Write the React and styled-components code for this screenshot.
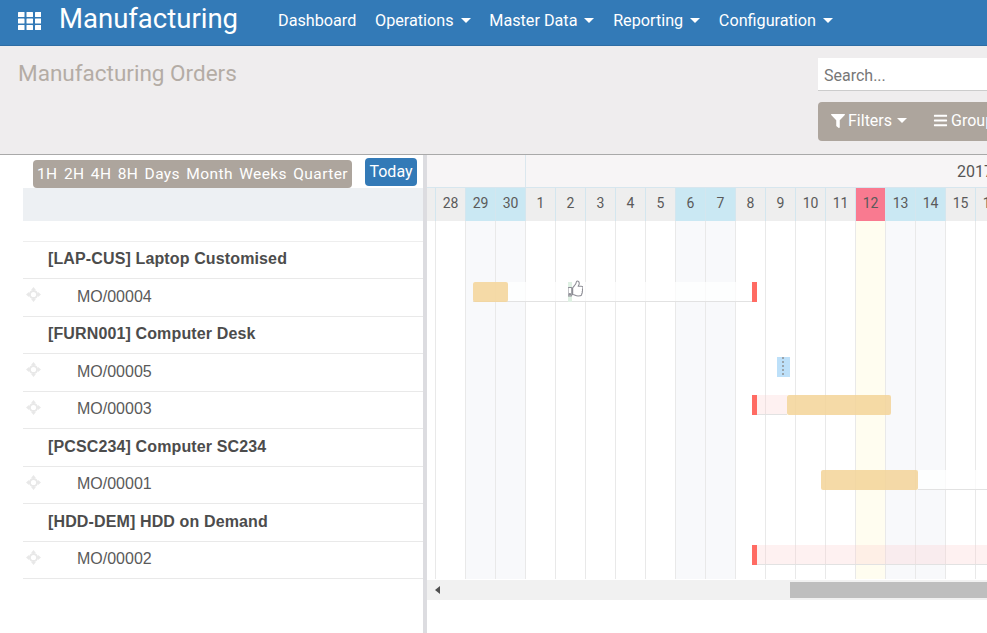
import React from "react";
import styled, { createGlobalStyle } from "styled-components";
import { FaFilter, FaBars, FaThumbsUp } from "react-icons/fa";

const CELL = 30;
const CHART_LEFT = 427;

const days = ["", 28, 29, 30, 1, 2, 3, 4, 5, 6, 7, 8, 9, 10, 11, 12, 13, 14, 15, 16, 17, 18];
const weekend = [29, 30, 6, 7, 13, 14];
const today = 12;

const GlobalStyle = createGlobalStyle`
  html, body {
    margin: 0;
    padding: 0;
    height: 100%;
    overflow: hidden;
    background: #fff;
    font-family: Roboto, sans-serif;
  }
`;

const Page = styled.div`
  width: 987px;
  height: 633px;
  overflow: hidden;
  display: flex;
  flex-direction: column;
`;

const Navbar = styled.nav`
  height: 41px;
  padding-bottom: 4px;
  flex: none;
  display: flex;
  align-items: center;
  background: #337ab7;
  border-bottom: 1px solid #2e6da4;
  color: #fff;
`;

const AppsIcon = styled.svg`
  width: 23px;
  height: 18px;
  margin-left: 18px;
  fill: #fff;
`;

const Brand = styled.div`
  font-size: 27.5px;
  line-height: 36px;
  margin-left: 18px;
  margin-right: 40px;
  position: relative;
  top: -2px;
`;

const NavList = styled.div`
  display: flex;
  gap: 18.7px;
  font-size: 16.2px;
`;

const NavItem = styled.div`
  display: flex;
  align-items: center;
  gap: 7px;
  white-space: nowrap;
`;

const Caret = styled.span`
  display: inline-block;
  border-top: 5px solid #fff;
  border-left: 5px solid transparent;
  border-right: 5px solid transparent;
`;

const ControlPanel = styled.div`
  height: 108px;
  flex: none;
  display: flex;
  background: #efedee;
  border-bottom: 1px solid #a9a9a9;
`;

const Title = styled.h1`
  flex: 0 0 800px;
  margin: 0;
  padding: 13px 0 0 18px;
  font-size: 22.5px;
  line-height: 28px;
  font-weight: 400;
  color: #b4aca5;
`;

const Tools = styled.div`
  flex: none;
  width: 400px;
  display: flex;
  flex-direction: column;
  gap: 11px;
  padding-top: 12px;
`;

const Search = styled.div`
  height: 32px;
  background: #fff;
  border-bottom: 1px solid #ccc;
  padding-left: 6px;
  line-height: 35px;
  font-size: 16px;
  color: #777;
`;

const FilterBar = styled.div`
  height: 39px;
  padding-bottom: 2px;
  box-sizing: border-box;
  background: #ada59d;
  border-radius: 4px;
  display: flex;
  align-items: center;
  gap: 26px;
  padding-left: 13px;
  color: #fff;
  font-size: 16px;
`;

const FilterButton = styled.div`
  display: flex;
  align-items: center;
  gap: 3px;
  white-space: nowrap;

  ${Caret} {
    margin-left: 2px;
  }
`;

const Workspace = styled.div`
  flex: 1;
  display: flex;
  min-height: 0;
`;

const LeftPanel = styled.div`
  flex: none;
  width: 423px;
  box-sizing: content-box;
  border-right: 4px solid #dcdce0;
`;

const ScaleRow = styled.div`
  height: 33px;
  display: flex;
  padding-left: 33px;
  padding-right: 6px;
  justify-content: space-between;
`;

const ScaleGroup = styled.div`
  height: 28px;
  margin-top: 5px;
  width: 319px;
  box-sizing: border-box;
  background: #ada59d;
  border-radius: 4px;
  display: flex;
  align-items: center;
  justify-content: space-between;
  padding: 0 4px;
  color: #fff;
  font-size: 15.5px;
  letter-spacing: 0.4px;
`;

const TodayButton = styled.div`
  width: 52px;
  height: 28px;
  margin-top: 3px;
  background: #337ab7;
  border-radius: 4px;
  color: #fff;
  font-size: 16px;
  line-height: 28px;
  text-align: center;
`;

const ListHead = styled.div`
  height: 33px;
  margin-left: 23px;
  background: #edf0f3;
`;

const ListSpacer = styled.div`
  height: 19.5px;
  margin-left: 23px;
  border-bottom: 1px solid #eee;
`;

const Row = styled.div`
  height: 37.5px;
  box-sizing: border-box;
  margin-left: 23px;
  padding-bottom: 1px;
  border-bottom: 1px solid #e9e9e9;
  position: relative;
  display: flex;
  align-items: center;
  font-family: "Liberation Sans", Arial, sans-serif;
  font-size: 16px;
  padding-left: ${(p) => (p.$group ? "25px" : "54px")};
  font-weight: ${(p) => (p.$group ? 700 : 400)};
  letter-spacing: ${(p) => (p.$group ? "0.13px" : "0")};
  color: ${(p) => (p.$group ? "#4c4c4c" : "#5a5a5a")};
`;

const DragHandle = styled.svg`
  position: absolute;
  left: 3px;
  top: 8px;
  width: 15px;
  height: 15px;
  color: #e8e8e8;
`;

const Chart = styled.div`
  flex: 1;
  min-width: 0;
  position: relative;
  overflow: hidden;
  display: flex;
  flex-direction: column;
`;

const HeadTop = styled.div`
  height: 33px;
  flex: none;
  display: flex;
  background: #f7f5f6;
  border-bottom: 1px solid #d7e6ee;
  box-sizing: border-box;
`;

const YearStub = styled.div`
  flex: 0 0 98px;
  border-right: 1px solid #dbe7ee;
`;

const Year = styled.div`
  padding-left: 431px;
  font-size: 16px;
  line-height: 34px;
  color: #555;
  white-space: nowrap;
`;

const DayRow = styled.div`
  height: 33px;
  flex: none;
  display: flex;
`;

const DayCell = styled.div`
  flex: 0 0 ${CELL}px;
  box-sizing: border-box;
  margin-left: ${(p) => (p.$first ? "-22px" : "0")};
  border-left: 1px solid #d3e6ef;
  text-align: center;
  font-size: 14px;
  line-height: 31px;
  color: #5a5a5a;
  background: ${(p) => (p.$today ? "#f97a90" : p.$weekend ? "#cae8f3" : "#eeeeee")};
`;

const Body = styled.div`
  position: relative;
  height: 358px;
  flex: none;
  display: flex;
`;

const Column = styled.div`
  flex: 0 0 ${CELL}px;
  box-sizing: border-box;
  margin-left: ${(p) => (p.$first ? "-22px" : "0")};
  border-left: 1px solid #e9e9e9;
  background: ${(p) => (p.$today ? "#fffdf0" : p.$weekend ? "#f8f9fb" : "#fff")};
`;

const BarLayer = styled.div`
  position: absolute;
  inset: 0;
  display: flex;
  flex-direction: column;
  padding-top: 20px;
`;

const BarRow = styled.div`
  height: 37.5px;
  flex: none;
  position: relative;
`;

const Bar = styled.div`
  position: absolute;
  top: 3.5px;
  height: 20px;
  box-sizing: border-box;
`;

const Ready = styled(Bar)`
  background: rgba(243, 212, 152, 0.85);
  border-radius: 2px;
`;

const Track = styled(Bar)`
  background: ${(p) => (p.$late ? "rgba(250, 205, 205, 0.28)" : "rgba(255, 255, 255, 0.72)")};
  border-bottom: 1px solid #e2e2e2;
`;

const Deadline = styled(Bar)`
  background: #ff6b63;
`;

const Pulse = styled(Bar)`
  background: #bde0f9;
  &::after {
    content: "";
    position: absolute;
    left: 5px;
    top: 0;
    bottom: 0;
    width: 2px;
    background: repeating-linear-gradient(to bottom, #9aa5ad 0 2px, transparent 2px 4px);
  }
`;

const Marker = styled(Bar)`
  background: #dff0e3;
`;

const ThumbIcon = styled(FaThumbsUp)`
  position: absolute;
  top: 1px;
  width: 15px;
  height: 17px;
  color: #fff;
  stroke: #8d8d95;
  stroke-width: 36px;
`;

const Scrollbar = styled.div`
  height: 20px;
  flex: none;
  margin-top: 1px;
  background: #f1f1f1;
  display: flex;
  align-items: center;
`;

const ScrollArrow = styled.span`
  margin-left: 8px;
  border-right: 5px solid #505050;
  border-top: 4px solid transparent;
  border-bottom: 4px solid transparent;
`;

const ScrollThumb = styled.div`
  height: 16px;
  width: 300px;
  margin-left: 350px;
  background: #bebebe;
`;

const rows = [
  { label: "[LAP-CUS] Laptop Customised", group: true },
  { label: "MO/00004" },
  { label: "[FURN001] Computer Desk", group: true },
  { label: "MO/00005" },
  { label: "MO/00003" },
  { label: "[PCSC234] Computer SC234", group: true },
  { label: "MO/00001" },
  { label: "[HDD-DEM] HDD on Demand", group: true },
  { label: "MO/00002" },
];

const scales = ["1H", "2H", "4H", "8H", "Days", "Month", "Weeks", "Quarter"];
const menu = ["Operations", "Master Data", "Reporting", "Configuration"];

const span = (from, to) => ({ left: from - CHART_LEFT, width: to - from });

const MoveIcon = () => (
  <DragHandle viewBox="0 0 15 15" fill="none">
    <circle cx="7.5" cy="7.5" r="3.6" stroke="currentColor" strokeWidth="2" />
    <path d="M7.5 0l2.4 3H5.1zM7.5 15l-2.4-3h4.8zM0 7.5l3-2.4v4.8zM15 7.5l-3 2.4V5.1z" fill="currentColor" />
  </DragHandle>
);

const AppsGlyph = () => (
  <AppsIcon viewBox="0 0 23 18">
    {[0, 6.5, 13].map((y) =>
      [0, 8.5, 17].map((x) => <rect key={`${x}-${y}`} x={x} y={y} width="6.5" height="5" rx="0.5" />)
    )}
  </AppsIcon>
);

const App = () => (
  <Page>
    <GlobalStyle />
    <Navbar>
      <AppsGlyph />
      <Brand>Manufacturing</Brand>
      <NavList>
        <NavItem>Dashboard</NavItem>
        {menu.map((item) => (
          <NavItem key={item}>
            {item}
            <Caret />
          </NavItem>
        ))}
      </NavList>
    </Navbar>

    <ControlPanel>
      <Title>Manufacturing Orders</Title>
      <Tools>
        <Search>Search...</Search>
        <FilterBar>
          <FilterButton>
            <FaFilter size={14} />
            Filters
            <Caret />
          </FilterButton>
          <FilterButton>
            <FaBars size={15} />
            Group By
            <Caret />
          </FilterButton>
        </FilterBar>
      </Tools>
    </ControlPanel>

    <Workspace>
      <LeftPanel>
        <ScaleRow>
          <ScaleGroup>
            {scales.map((s) => (
              <span key={s}>{s}</span>
            ))}
          </ScaleGroup>
          <TodayButton>Today</TodayButton>
        </ScaleRow>
        <ListHead />
        <ListSpacer />
        {rows.map((r) => (
          <Row key={r.label} $group={r.group}>
            {!r.group && <MoveIcon />}
            {r.label}
          </Row>
        ))}
      </LeftPanel>

      <Chart>
        <HeadTop>
          <YearStub />
          <Year>2017</Year>
        </HeadTop>
        <DayRow>
          {days.map((d, i) => (
            <DayCell key={i} $first={i === 0} $weekend={weekend.includes(d)} $today={d === today}>
              {d}
            </DayCell>
          ))}
        </DayRow>
        <Body>
          {days.map((d, i) => (
            <Column key={i} $first={i === 0} $weekend={weekend.includes(d)} $today={d === today} />
          ))}
          <BarLayer>
            <BarRow />
            <BarRow>
              <Track style={span(473, 752)} />
              <Ready style={span(473, 508)} />
              <Marker style={span(568, 572)} />
              <ThumbIcon style={{ left: 568 - CHART_LEFT }} />
              <Deadline style={span(752, 757)} />
            </BarRow>
            <BarRow />
            <BarRow>
              <Pulse style={span(777, 790)} />
            </BarRow>
            <BarRow>
              <Track $late style={span(757, 787)} />
              <Ready style={span(787, 891)} />
              <Deadline style={span(752, 757)} />
            </BarRow>
            <BarRow />
            <BarRow>
              <Track style={span(918, 1040)} />
              <Ready style={span(821, 918)} />
            </BarRow>
            <BarRow />
            <BarRow>
              <Track $late style={span(757, 1040)} />
              <Deadline style={span(752, 757)} />
            </BarRow>
          </BarLayer>
        </Body>
        <Scrollbar>
          <ScrollArrow />
          <ScrollThumb />
        </Scrollbar>
      </Chart>
    </Workspace>
  </Page>
);

export default App;
